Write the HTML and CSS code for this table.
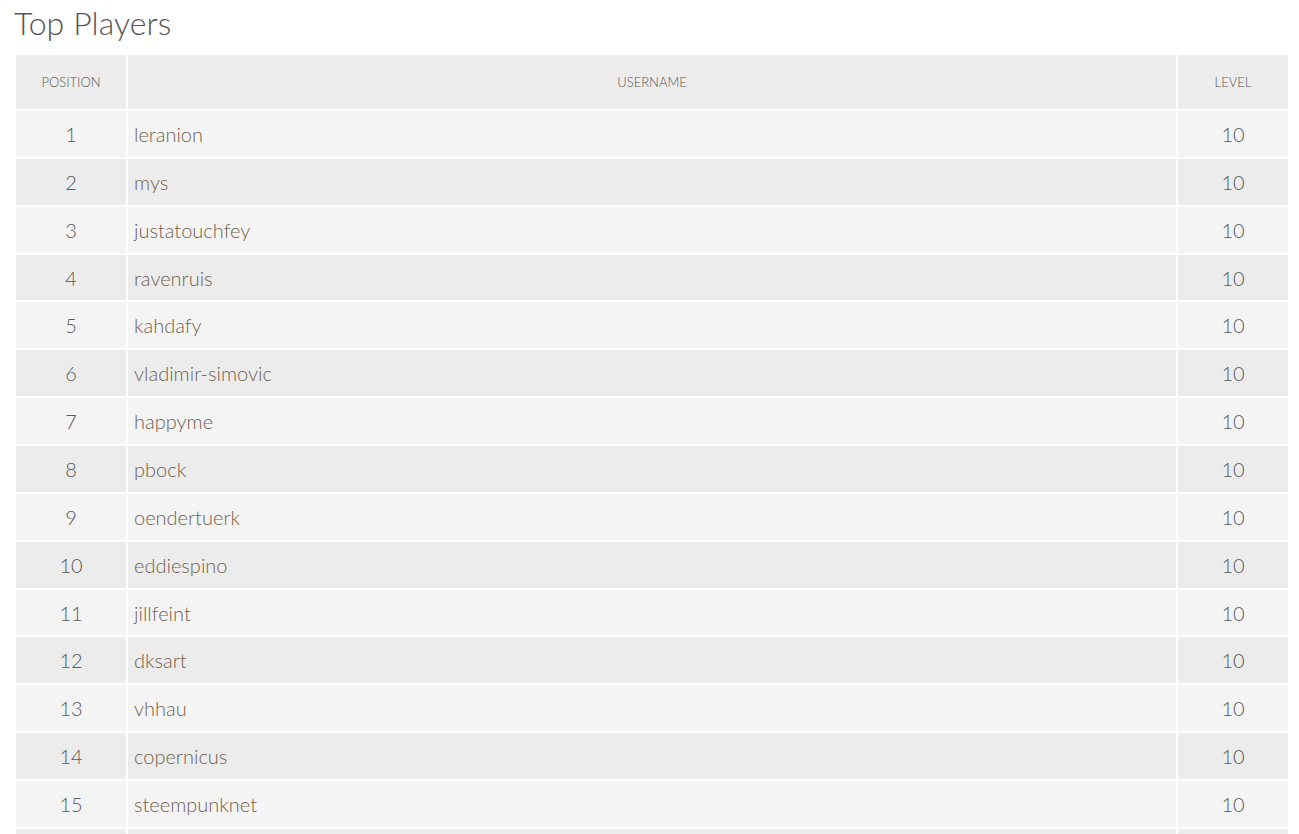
FILE: index.html
```html
<!DOCTYPE html>
<html>
<head>
<meta charset="utf-8">
<link rel="stylesheet" href="styles.css">
</head>
<body>
<div class="page">
  <h1 class="title">Top Players</h1>
  <table class="players">
    <thead>
      <tr><th class="pos">Position</th><th>Username</th><th class="lvl">Level</th></tr>
    </thead>
    <tbody>
      <tr><td class="pos">1</td><td class="user">leranion</td><td class="lvl">10</td></tr>
      <tr><td class="pos">2</td><td class="user">mys</td><td class="lvl">10</td></tr>
      <tr><td class="pos">3</td><td class="user">justatouchfey</td><td class="lvl">10</td></tr>
      <tr><td class="pos">4</td><td class="user">ravenruis</td><td class="lvl">10</td></tr>
      <tr><td class="pos">5</td><td class="user">kahdafy</td><td class="lvl">10</td></tr>
      <tr><td class="pos">6</td><td class="user">vladimir-simovic</td><td class="lvl">10</td></tr>
      <tr><td class="pos">7</td><td class="user">happyme</td><td class="lvl">10</td></tr>
      <tr><td class="pos">8</td><td class="user">pbock</td><td class="lvl">10</td></tr>
      <tr><td class="pos">9</td><td class="user">oendertuerk</td><td class="lvl">10</td></tr>
      <tr><td class="pos">10</td><td class="user">eddiespino</td><td class="lvl">10</td></tr>
      <tr><td class="pos">11</td><td class="user">jillfeint</td><td class="lvl">10</td></tr>
      <tr><td class="pos">12</td><td class="user">dksart</td><td class="lvl">10</td></tr>
      <tr><td class="pos">13</td><td class="user">vhhau</td><td class="lvl">10</td></tr>
      <tr><td class="pos">14</td><td class="user">copernicus</td><td class="lvl">10</td></tr>
      <tr><td class="pos">15</td><td class="user">steempunknet</td><td class="lvl">10</td></tr>
      <tr><td class="pos">16</td><td class="user">artgirl</td><td class="lvl">10</td></tr>
    </tbody>
  </table>
</div>
</body>
</html>
```
FILE: styles.css
```css
html, body {
  margin: 0;
  padding: 0;
  background: #ffffff;
  font-family: Lato, "Open Sans", sans-serif;
}
.page {
  padding: 0 9px 0 14px;
}
.title {
  margin: 0;
  padding-top: 4px;
  height: 39px;
  font-size: 32px;
  line-height: 38px;
  font-weight: 300;
  color: #555555;
  letter-spacing: 0.1px;
}
.players {
  margin-top: 10px;
  width: 1276px;
  border-collapse: separate;
  border-spacing: 2px;
  table-layout: fixed;
}
.players th {
  height: 54px;
  padding: 0;
  background: #ededed;
  font-size: 13px;
  font-weight: 300;
  text-transform: uppercase;
  color: #555555;
  text-align: center;
  vertical-align: middle;
}
.players th.pos, .players th.lvl {
  width: 110px;
}
.players td {
  height: 45.86px;
  padding: 0;
  font-size: 20px;
  font-weight: 300;
  color: #5a5a5a;
  vertical-align: middle;
}
.players tbody tr:nth-child(odd) td {
  background: #f4f4f4;
}
.players tbody tr:nth-child(even) td {
  background: #ececec;
}
.players td.pos, .players td.lvl {
  text-align: center;
}
.players td.user {
  padding-left: 6px;
  color: #72624c;
}
```
